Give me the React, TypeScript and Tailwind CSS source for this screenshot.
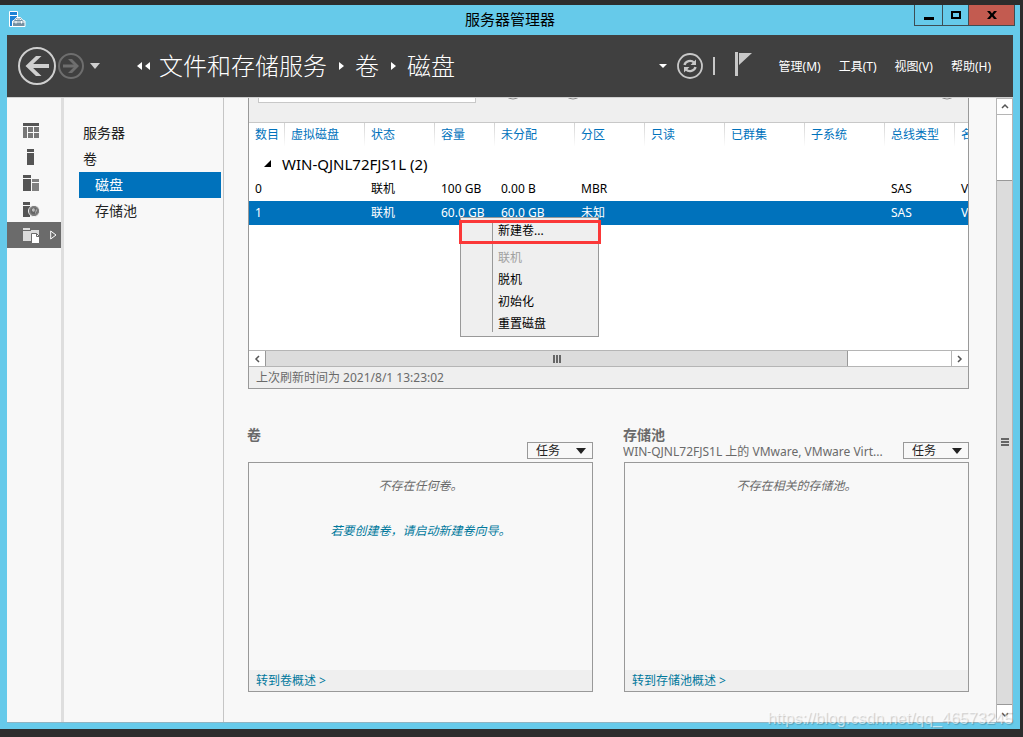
import type { ReactNode } from "react";

type Column = {
  label: string;
  width: string;
};

const columns: Column[] = [
  { label: "数目", width: "w-9" },
  { label: "虚拟磁盘", width: "w-20" },
  { label: "状态", width: "w-[70px]" },
  { label: "容量", width: "w-[60px]" },
  { label: "未分配", width: "w-20" },
  { label: "分区", width: "w-[70px]" },
  { label: "只读", width: "w-20" },
  { label: "已群集", width: "w-20" },
  { label: "子系统", width: "w-20" },
  { label: "总线类型", width: "w-[70px]" },
  { label: "名称", width: "w-[60px]" },
];

const disks = [
  {
    selected: false,
    cells: ["0", "", "联机", "100 GB", "0.00 B", "MBR", "", "", "", "SAS", "VMware"],
  },
  {
    selected: true,
    cells: ["1", "", "联机", "60.0 GB", "60.0 GB", "未知", "", "", "", "SAS", "VMware"],
  },
];

const menus = ["管理(M)", "工具(T)", "视图(V)", "帮助(H)"];

export default function App() {
  return (
    <div className="flex h-screen flex-col bg-[#2d2d2d] pt-[5px] pr-[3px] pb-2 font-['Noto_Sans','Noto_Sans_CJK_SC',sans-serif] text-xs text-black">
      <div className="relative flex min-h-0 flex-1 flex-col bg-[#66caea] px-[7px] pb-1.5">
        <TitleBar />
        <Header />
        <div className="flex min-h-0 flex-1 border-t border-b border-t-[#d0d0d0] border-b-[#8fb4c2] bg-[#f8f8f8]">
          <Rail />
          <SideNav />
          <main className="min-w-0 flex-1 overflow-hidden pr-[27px] pl-6">
            <DiskPanel />
            <div className="mt-[37px] grid grid-cols-2 gap-[31px]">
              <Tile title="卷" footer="转到卷概述 >">
                <p className="text-[#6a6a6a]">不存在任何卷。</p>
                <a href="#" className="mt-[27px] text-[#00789c]">
                  若要创建卷，请启动新建卷向导。
                </a>
              </Tile>
              <Tile
                title="存储池"
                subtitle="WIN-QJNL72FJS1L 上的 VMware, VMware Virt..."
                footer="转到存储池概述 >"
              >
                <p className="text-[#6a6a6a]">不存在相关的存储池。</p>
              </Tile>
            </div>
          </main>
          <VerticalScrollbar />
        </div>
        <p className="pointer-events-none absolute right-[7px] bottom-0 font-['Liberation_Sans',sans-serif] text-base leading-5 text-white/60 [text-shadow:1px_1px_1px_rgba(0,0,0,0.2)]">
          https://blog.csdn.net/qq_46573245
        </p>
      </div>
    </div>
  );
}

function TitleBar() {
  return (
    <div className="relative flex h-[30px] shrink-0 items-center justify-center pb-0.5">
      <svg className="absolute top-1.5 left-0.5" width="18" height="18" viewBox="0 0 18 18">
        <path d="M.5.5h8v15h-8z" fill="#1d82d6" stroke="#fff" />
        <path d="M1 4.500h7" stroke="#fff" />
        <path d="M3.500 15.500v-5.500l2-1 2-2.500h4l2 2.500 2.500 1v5.500z" fill="#7590a2" stroke="#fff" />
        <path d="M7 9l1-1h3l1 1M4 11h12M7 10v2.500M12.500 10v2.500" fill="none" stroke="#fff" />
      </svg>
      <h1 className="text-[15px]">服务器管理器</h1>
      <div className="absolute top-0 -right-0.5 flex h-[21px] border border-t-0 border-[#3d4d54]">
        <button aria-label="最小化" className="flex w-7 items-center justify-center border-r border-[#3d4d54]">
          <span className="mt-1.5 h-[3px] w-2.5 bg-black" />
        </button>
        <button aria-label="最大化" className="flex w-[25px] items-center justify-center">
          <span className="h-2 w-2.5 border-2 border-black" />
        </button>
        <button
          aria-label="关闭"
          className="flex w-[46px] items-center justify-center border-l border-[#3d4d54] bg-[#c35b50]"
        >
          <svg width="10" height="8" viewBox="0 0 10 8">
            <path d="M0 0h3l2 2.500L7 0h3L6.600 4 10 8H7L5 5.500 3 8H0l3.400-4z" />
          </svg>
        </button>
      </div>
    </div>
  );
}

function Header() {
  return (
    <header className="flex h-[62px] shrink-0 items-center bg-[#404040] pr-[22px] pl-2.5 text-white">
      <button aria-label="后退">
        <svg width="40" height="40" viewBox="0 0 40 40" fill="none" stroke="#cfcfcf">
          <circle cx="20" cy="20" r="18" strokeWidth="2" />
          <path d="M32 20H11" strokeWidth="4" />
          <path d="M24.500 10h-5.500L8.500 20 19 30h5.500L14 20z" fill="#cfcfcf" stroke="none" />
        </svg>
      </button>
      <button aria-label="前进">
        <svg width="28" height="28" viewBox="0 0 28 28" fill="none" stroke="#6e6e6e">
          <circle cx="14" cy="14" r="12" strokeWidth="2" />
          <path d="M6 14h14" strokeWidth="3" />
          <path d="M11 7h4l7 7-7 7h-4l7-7z" fill="#6e6e6e" stroke="none" />
        </svg>
      </button>
      <button aria-label="历史记录" className="ml-1">
        <svg width="12" height="6" viewBox="0 0 12 6" fill="#cfcfcf">
          <path d="M1 0h10L6 6z" />
        </svg>
      </button>
      <nav className="ml-9 flex items-center text-2xl leading-8 font-light">
        <svg width="14" height="8" viewBox="0 0 14 8" fill="#fff">
          <path d="M5 0v8L0 4zM13 0v8L8 4z" />
        </svg>
        <a href="#" className="ml-2">
          文件和存储服务
        </a>
        <Crumb />
        <a href="#">卷</a>
        <Crumb />
        <a href="#">磁盘</a>
      </nav>
      <div className="ml-auto flex items-center">
        <button aria-label="刷新选项">
          <svg width="8" height="4" viewBox="0 0 8 4" fill="#fff">
            <path d="M0 0h8L4 4z" />
          </svg>
        </button>
        <button aria-label="刷新" className="ml-2.5">
          <svg width="26" height="26" viewBox="0 0 26 26" fill="none" stroke="#c8c8c8">
            <circle cx="13" cy="13" r="12" strokeWidth="1.800" />
            <path d="M7.500 12c1-4 6.500-5.500 9.500-2.500M18.500 14c-1 4-6.500 5.500-9.500 2.500" strokeWidth="2.400" />
            <path d="M19 6.500v5.500h-5.500zM7 19.500V14h5.500z" fill="#c8c8c8" stroke="none" />
          </svg>
        </button>
        <span className="ml-2.5 h-[18px] w-0.5 bg-[#c8c8c8]" />
        <button aria-label="通知" className="ml-5">
          <svg width="18" height="28" viewBox="0 0 18 28" fill="#c8c8c8">
            <path d="M0 0h3v24H0zM4 1h13L4 13z" />
          </svg>
        </button>
        <div className="ml-[26px] flex gap-[18px] pt-0.5">
          {menus.map((menu) => (
            <button key={menu}>{menu}</button>
          ))}
        </div>
      </div>
    </header>
  );
}

function Crumb() {
  return (
    <svg className="mx-[11px]" width="6" height="8" viewBox="0 0 6 8" fill="#fff">
      <path d="M1 0v8l5-4z" />
    </svg>
  );
}

function Rail() {
  return (
    <nav className="w-[54px] shrink-0 pt-5">
      <RailItem label="仪表板">
        <path d="M0 0h16v3H0z" fill="#555" />
        <path d="M0 4h4v11H0zM5 4h5v5H5zM11 4h5v5h-5zM5 10h5v5H5zM11 10h5v5h-5z" fill="#777" />
      </RailItem>
      <RailItem label="本地服务器">
        <path d="M4 0h7v3H4zM4 4h7v12H4z" fill="#555" />
      </RailItem>
      <RailItem label="所有服务器">
        <path d="M0 0h8v3H0zM0 4h8v12H0z" fill="#555" />
        <path d="M9 4h7v3H9zM9 8h7v8H9z" fill="#808080" />
      </RailItem>
      <RailItem label="IIS">
        <path d="M0 1h7v3H0zM0 5h7v11H0z" fill="#555" />
        <circle cx="11" cy="10" r="5.500" fill="#555" stroke="#f8f8f8" />
        <circle cx="11" cy="10" r="4.200" fill="#666" stroke="#999" strokeWidth=".8" />
        <path d="M9 8l2-1 1 2-1 2-2-1zM13 8l1 1-1 3-1 1z" fill="#bbb" />
      </RailItem>
      <RailItem label="文件和存储服务" active>
        <path d="M0 1h7v2H0zM0 4h8V3h8v11H0z" fill="#dcdcdc" />
        <path d="M8.500 6.500h5l3 3v7h-8z" fill="#fff" stroke="#6b6b6b" />
        <path d="M13.500 6.500v3h3" fill="none" stroke="#6b6b6b" />
      </RailItem>
    </nav>
  );
}

function RailItem({ label, active, children }: { label: string; active?: boolean; children: ReactNode }) {
  return (
    <a
      href="#"
      aria-label={label}
      className={`flex h-[26px] items-center pl-4 ${active ? "bg-[#6b6b6b]" : ""}`}
    >
      <svg width="17" height="17" viewBox="0 0 17 17">
        {children}
      </svg>
      {active && (
        <svg className="ml-2.5" width="7" height="10" viewBox="0 0 7 10">
          <path d="M.7 1v8L6 5z" fill="none" stroke="#fff" />
        </svg>
      )}
    </a>
  );
}

function SideNav() {
  return (
    <nav className="w-[163px] shrink-0 border-r border-l-3 border-r-[#c6c6c6] border-l-[#dedede] pt-[22px] pr-0.5 pl-[15px] text-sm leading-[26px] text-[#222]">
      <a href="#" className="block pl-1">
        服务器
      </a>
      <a href="#" className="block pl-1">
        卷
      </a>
      <a href="#" className="block bg-[#0072bc] pl-4 text-white">
        磁盘
      </a>
      <a href="#" className="block pl-4">
        存储池
      </a>
    </nav>
  );
}

function DiskPanel() {
  return (
    <section className="relative border border-t-0 border-[#999] bg-white">
      <div className="h-[25px] overflow-hidden border-b border-[#c8c8c8] bg-[#efefef]">
        {/* toolbar, scrolled most of the way out of view */}
        <div className="-mt-5 flex h-[25px] items-start px-[9px]">
          <input aria-label="筛选器" className="h-[25px] w-[218px] border border-[#c8c8c8] bg-white" />
          <RoundButton label="保存" className="ml-[25px]" />
          <RoundButton label="查询" className="ml-9" />
          <RoundButton label="展开" className="ml-auto" />
        </div>
      </div>

      <div className="h-[227px] overflow-hidden">
        <table className="w-[766px] table-fixed border-separate border-spacing-0 text-left">
          <thead>
            <tr className="h-[23px]">
              {columns.map((column) => (
                <th
                  key={column.label}
                  className={`${column.width} border-r [border-image:linear-gradient(#d0d0d0,#ffffff)_1] pl-1.5 font-normal whitespace-nowrap text-[#0072bc]`}
                >
                  {column.label}
                </th>
              ))}
            </tr>
          </thead>
          <tbody>
            <tr className="h-[31px]">
              <td colSpan={11} className="pl-[15px] text-[15px] leading-5">
                <div className="flex items-center gap-2.5 pt-1">
                  <svg width="8" height="7" viewBox="0 0 8 7">
                    <path d="M7 0v7H0z" />
                  </svg>
                  WIN-QJNL72FJS1L (2)
                </div>
              </td>
            </tr>
            {disks.map((disk) => (
              <tr key={disk.cells[0]} className={`h-6 ${disk.selected ? "bg-[#0072bc] text-white" : ""}`}>
                {disk.cells.map((cell, i) => (
                  <td key={i} className="pl-1.5 whitespace-nowrap">
                    {cell}
                  </td>
                ))}
              </tr>
            ))}
          </tbody>
        </table>
      </div>

      <div className="flex h-[17px] border-y border-[#b5b5b5] bg-white">
        <button aria-label="向左滚动" className="flex w-4 items-center justify-center">
          <Chevron d="M6 1L3 4l3 3" />
        </button>
        <div className="flex flex-1">
          <div className="flex w-[85%] items-center justify-center gap-px border-x border-[#999] bg-[#dcdcdc]">
            <span className="h-2 w-0.5 bg-[#666]" />
            <span className="h-2 w-0.5 bg-[#666]" />
            <span className="h-2 w-0.5 bg-[#666]" />
          </div>
        </div>
        <button aria-label="向右滚动" className="flex w-[17px] items-center justify-center border-l border-[#b5b5b5]">
          <Chevron d="M2 1l3 3-3 3" />
        </button>
      </div>
      <p className="h-[21px] bg-[#efefef] pl-[7px] leading-[22px] text-[#6a6a6a]">上次刷新时间为 2021/8/1 13:23:02</p>

      <ContextMenu />
    </section>
  );
}

function RoundButton({ label, className }: { label: string; className: string }) {
  return (
    <button aria-label={label} className={`h-[22px] w-6 ${className}`}>
      <svg width="24" height="22" viewBox="0 0 24 22">
        <circle cx="12" cy="11" r="10" fill="#f7f7f7" stroke="#888" />
      </svg>
    </button>
  );
}

function ContextMenu() {
  return (
    <div className="absolute top-[119px] left-[211px] w-[139px] border border-[#999] bg-[#efefef] pt-0.5 pb-px">
      <span className="absolute top-1 bottom-1 left-[31px] w-px bg-[#999]" />
      <button className="block h-[22px] w-full pl-[37px] text-left leading-[22px]">新建卷...</button>
      <div className="mt-[5px]">
        <button disabled className="block h-[22px] w-full pl-[37px] text-left leading-[22px] text-[#a0a0a0]">
          联机
        </button>
        <button className="block h-[22px] w-full pl-[37px] text-left leading-[22px]">脱机</button>
        <button className="block h-[22px] w-full pl-[37px] text-left leading-[22px]">初始化</button>
        <button className="block h-[22px] w-full pl-[37px] text-left leading-[22px]">重置磁盘</button>
      </div>
      <span className="pointer-events-none absolute top-0.5 -right-[3px] -left-0.5 h-6 border-3 border-[#fb3838]" />
    </div>
  );
}

function Tile({
  title,
  subtitle,
  footer,
  children,
}: {
  title: string;
  subtitle?: string;
  footer: string;
  children: ReactNode;
}) {
  return (
    <section className="min-w-0">
      <div className="flex h-9 items-end justify-between gap-2 pb-[3px]">
        <div className="-ml-px h-full min-w-0 text-[#6a6a6a]">
          <h2 className="text-sm leading-[18px] font-bold">{title}</h2>
          {subtitle && <p className="truncate leading-4">{subtitle}</p>}
        </div>
        <div className="relative shrink-0">
          <select
            aria-label={`${title} 任务`}
            className="block h-[17px] w-[66px] appearance-none border border-[#999] bg-[#f8f8f8] pl-2 leading-[15px] text-[#222]"
          >
            <option>任务</option>
          </select>
          <svg
            className="pointer-events-none absolute top-1.5 right-1.5"
            width="12"
            height="6"
            viewBox="0 0 12 6"
            fill="#222"
          >
            <path d="M1 0h10L6 6z" />
          </svg>
        </div>
      </div>
      <div className="flex h-[230px] flex-col border border-[#999]">
        <div className="flex flex-1 flex-col items-center pt-3.5 leading-[18px] italic">{children}</div>
        <a href="#" className="h-[21px] bg-[#efefef] pl-[7px] leading-[22px] text-[#00789c]">
          {footer}
        </a>
      </div>
    </section>
  );
}

function VerticalScrollbar() {
  return (
    <div className="flex w-[17px] shrink-0 flex-col border-x border-[#b5b5b5] bg-white">
      <button aria-label="向上滚动" className="flex h-[17px] items-center justify-center border-y border-[#b5b5b5]">
        <Chevron d="M1 5l3-3 3 3" />
      </button>
      <div className="flex flex-1 flex-col justify-end">
        <div className="flex h-[89%] flex-col items-center justify-center gap-px border-y border-[#999] bg-[#dcdcdc]">
          <span className="h-0.5 w-2 bg-[#666]" />
          <span className="h-0.5 w-2 bg-[#666]" />
          <span className="h-0.5 w-2 bg-[#666]" />
        </div>
      </div>
      <button aria-label="向下滚动" className="flex h-[17px] items-center justify-center">
        <Chevron d="M1 3l3 3 3-3" />
      </button>
    </div>
  );
}

function Chevron({ d }: { d: string }) {
  return (
    <svg width="8" height="8" viewBox="0 0 8 8" fill="none" stroke="#555" strokeWidth="1.500">
      <path d={d} />
    </svg>
  );
}
